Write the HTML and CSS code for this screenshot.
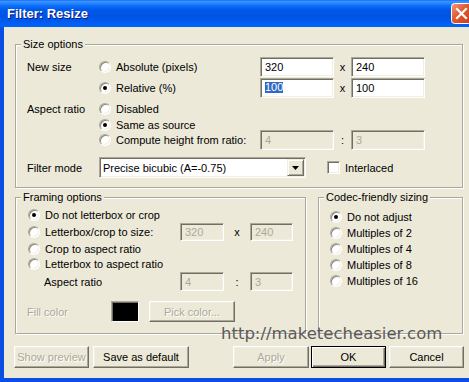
FILE: index.html
```html
<!DOCTYPE html>
<html lang="en">
<head>
    <meta charset="UTF-8">
    <meta name="viewport" content="width=device-width, initial-scale=1.0">
    <title>Filter: Resize</title>
    <link rel="stylesheet" href="styles.css">
</head>
<body>
<div class="window">
    <div class="titlebar">
        <span class="title">Filter: Resize</span>
        <svg class="close" width="21" height="21" viewBox="0 0 21 21">
            <defs>
                <linearGradient id="closeFill" x1="0" y1="0" x2="1" y2="1">
                    <stop offset="0" stop-color="#f39a7c"/>
                    <stop offset="0.45" stop-color="#e2582f"/>
                    <stop offset="1" stop-color="#c63e1a"/>
                </linearGradient>
            </defs>
            <rect x="0.5" y="0.5" width="20" height="20" rx="3" fill="url(#closeFill)" stroke="#fff"/>
            <path d="M6 6 L15 15 M15 6 L6 15" stroke="#fff" stroke-width="2.2" stroke-linecap="square"/>
        </svg>
    </div>

    <div class="client">
        <fieldset class="group">
            <legend>Size options</legend>
            <div class="size-grid">
                <span class="lbl">New size</span>
                <span class="opt"><i class="radio"></i>Absolute (pixels)</span>
                <span class="edit">320</span>
                <span class="sep">x</span>
                <span class="edit">240</span>

                <span class="opt c2"><i class="radio on"></i>Relative (%)</span>
                <span class="edit"><span class="sel">100</span></span>
                <span class="sep">x</span>
                <span class="edit">100</span>

                <span class="lbl c1">Aspect ratio</span>
                <span class="opt"><i class="radio"></i>Disabled</span>
                <span class="opt c2"><i class="radio on"></i>Same as source</span>
                <span class="opt c2"><i class="radio"></i>Compute height from ratio:</span>
                <span class="edit off">4</span>
                <span class="sep">:</span>
                <span class="edit off">3</span>
            </div>
            <div class="filter-row">
                <span class="lbl filter-lbl">Filter mode</span>
                <div class="combo">
                    <span class="combo-text">Precise bicubic (A=-0.75)</span>
                    <span class="drop">
                        <svg width="7" height="4" viewBox="0 0 7 4"><path d="M0 0 H7 L3.5 4 Z" fill="#000"/></svg>
                    </span>
                </div>
                <span class="opt interlaced"><i class="check"></i>Interlaced</span>
            </div>
        </fieldset>

        <div class="lower">
            <fieldset class="group framing">
                <legend>Framing options</legend>
                <div class="framing-grid">
                    <span class="opt c1"><i class="radio on"></i>Do not letterbox or crop</span>
                    <span class="opt c1"><i class="radio"></i>Letterbox/crop to size:</span>
                    <span class="edit off">320</span>
                    <span class="sep">x</span>
                    <span class="edit off">240</span>
                    <span class="opt c1"><i class="radio"></i>Crop to aspect ratio</span>
                    <span class="opt c1"><i class="radio"></i>Letterbox to aspect ratio</span>
                    <span class="lbl c1 indent">Aspect ratio</span>
                    <span class="edit off">4</span>
                    <span class="sep">:</span>
                    <span class="edit off">3</span>
                </div>
                <div class="fill-row">
                    <span class="lbl disabled fill-lbl">Fill color</span>
                    <span class="swatch"></span>
                    <button class="btn disabled pick">Pick color...</button>
                </div>
            </fieldset>

            <fieldset class="group codec">
                <legend>Codec-friendly sizing</legend>
                <div class="codec-list">
                    <span class="opt"><i class="radio on"></i>Do not adjust</span>
                    <span class="opt"><i class="radio"></i>Multiples of 2</span>
                    <span class="opt"><i class="radio"></i>Multiples of 4</span>
                    <span class="opt"><i class="radio"></i>Multiples of 8</span>
                    <span class="opt"><i class="radio"></i>Multiples of 16</span>
                </div>
            </fieldset>
        </div>

        <div class="buttons">
            <button class="btn disabled preview">Show preview</button>
            <button class="btn save">Save as default</button>
            <button class="btn disabled apply">Apply</button>
            <button class="btn default ok">OK</button>
            <button class="btn cancel">Cancel</button>
        </div>
    </div>

    <div class="watermark">http://maketecheasier.com</div>
</div>
</body>
</html>
```

FILE: styles.css
```css
* {
    box-sizing: border-box;
}
body {
    margin: 0;
    overflow: hidden;
    background: #fff;
    font-family: "Liberation Sans", Arial, sans-serif;
    font-size: 11px;
    color: #000;
}
.window {
    position: relative;
    width: 478px;
    height: 382px;
    display: flex;
    flex-direction: column;
}

/* title bar */
.titlebar {
    height: 27px;
    flex: none;
    display: flex;
    align-items: center;
    padding-left: 7px;
    background: linear-gradient(to bottom, #0a5cf0 0, #3d95ff 1px, #2a8aff 3px, #0a6cf8 6px, #0058e8 10px, #0054e3 16px, #0057ea 20px, #0061f6 24px, #0064f2 27px);
}
.title {
    color: #fff;
    font-weight: bold;
    font-size: 13px;
    line-height: 15px;
    text-shadow: 1px 1px 0 #0a1883;
}
.close {
    margin-left: auto;
    margin-right: 6px;
    display: block;
}

/* client area */
.client {
    flex: 1;
    display: flex;
    flex-direction: column;
    background: #ece9d8;
    border-left: 4px solid #0b4ee4;
    border-right: 4px solid #0b4ee4;
    border-bottom: 4px solid #0b4ee4;
    padding: 11px 11px 0;
}
.group {
    margin: 0;
    padding: 0;
    min-width: 0;
    border: 1px solid #aca899;
    box-shadow: inset 1px 1px 0 #fff, 1px 1px 0 #fff;
}
.group legend {
    margin-left: 5px;
    padding: 0 2px;
    line-height: 13px;
    background: #ece9d8;
}

.lbl {
    display: flex;
    align-items: center;
}
.opt {
    display: flex;
    align-items: center;
    white-space: nowrap;
}
.c1 {
    grid-column: 1;
}
.c2 {
    grid-column: 2;
}
.sep {
    display: flex;
    align-items: center;
    justify-content: center;
}

.radio {
    position: relative;
    flex: none;
    width: 12px;
    height: 12px;
    margin-right: 5px;
    border-radius: 50%;
    background: #fff;
    border: 1px solid;
    border-color: #aca899 #fff #fff #aca899;
    box-shadow: inset 1px 1px 0 #8d8a7d, inset -1px -1px 0 #f1efe2;
}
.radio.on::after {
    content: "";
    position: absolute;
    left: 3px;
    top: 3px;
    width: 4px;
    height: 4px;
    border-radius: 50%;
    background: #000;
}
.check {
    flex: none;
    width: 13px;
    height: 13px;
    margin-right: 5px;
    background: #fff;
    border: 1px solid;
    border-color: #aca899 #fff #fff #aca899;
    box-shadow: inset 1px 1px 0 #716f64, inset -1px -1px 0 #f1efe2;
}
.edit {
    display: flex;
    align-items: center;
    padding: 0 4px;
    background: #fff;
    border: 1px solid;
    border-color: #aca899 #fff #fff #aca899;
    box-shadow: inset 1px 1px 0 #716f64, inset -1px -1px 0 #f1efe2;
    white-space: nowrap;
}
.edit.off {
    background: #ece9d8;
    color: #aca899;
}
.sel {
    display: inline-block;
    height: 11px;
    line-height: 11px;
    background: #316ac5;
    color: #fff;
}

/* size options */
.size-grid {
    display: grid;
    grid-template-columns: 72px 161px 74px 17px 74px;
    grid-template-rows: 21px 21px 22px 10px 20px;
    align-items: center;
    padding: 5px 0 0 11px;
}
.size-grid .edit {
    height: 20px;
}
.filter-row {
    display: flex;
    align-items: center;
    margin-top: 7px;
    padding: 0 0 9px 11px;
}
.filter-lbl {
    width: 72px;
}
.combo {
    display: flex;
    align-items: center;
    width: 207px;
    height: 21px;
    padding: 1px;
    background: #fff;
    border: 1px solid;
    border-color: #aca899 #fff #fff #aca899;
    box-shadow: inset 1px 1px 0 #716f64, inset -1px -1px 0 #f1efe2;
}
.combo-text {
    padding-left: 2px;
}
.drop {
    margin-left: auto;
    width: 17px;
    height: 17px;
    display: flex;
    align-items: center;
    justify-content: center;
    background: #ece9d8;
    border: 1px solid;
    border-color: #f1efe2 #716f64 #716f64 #f1efe2;
    box-shadow: inset 1px 1px 0 #fff, inset -1px -1px 0 #aca899;
}
.drop svg {
    display: block;
}
.interlaced {
    margin-left: 21px;
}

/* lower groups */
.lower {
    display: flex;
    gap: 12px;
    margin-top: 3px;
}
.framing {
    width: 291px;
}
.codec {
    width: 145px;
}
.framing-grid {
    display: grid;
    grid-template-columns: 152px 44px 26px 43px;
    grid-template-rows: 16px 18px 15px 16px 19px;
    align-items: center;
    padding: 3px 0 0 12px;
}
.framing-grid .edit {
    align-self: stretch;
}
.indent {
    padding-left: 16px;
}
.fill-row {
    display: flex;
    align-items: center;
    height: 21px;
    margin-top: 10px;
    margin-bottom: 11px;
    padding-left: 11px;
}
.fill-lbl {
    width: 84px;
}
.disabled {
    color: #aca899;
    text-shadow: 1px 1px 0 #fff;
}
.swatch {
    width: 28px;
    height: 21px;
    margin-right: 10px;
    background: #000;
    border: 1px solid;
    border-color: #aca899 #fff #fff #aca899;
    box-shadow: inset 1px 1px 0 #716f64;
}
.codec-list {
    display: flex;
    flex-direction: column;
    padding: 5px 0 0 11px;
}
.codec-list .opt {
    height: 16px;
}

/* buttons */
.btn {
    height: 22px;
    padding: 0;
    font: inherit;
    color: #000;
    background: #ece9d8;
    border: 1px solid;
    border-color: #fff #716f64 #716f64 #fff;
    box-shadow: inset -1px -1px 0 #aca899, inset 1px 1px 0 #f1efe2;
}
.btn.disabled {
    color: #aca899;
}
.btn.default {
    border-color: #000;
    box-shadow: inset 1px 1px 0 #fff, inset -1px -1px 0 #716f64, inset -2px -2px 0 #aca899;
}
.pick {
    width: 86px;
    height: 21px;
}
.buttons {
    display: flex;
    margin: 12px -1px 0 -1px;
}
.preview {
    width: 75px;
}
.save {
    width: 96px;
    margin-left: 4px;
}
.apply {
    width: 76px;
    margin-left: auto;
}
.ok {
    width: 75px;
    margin-left: 2px;
}
.cancel {
    width: 75px;
    margin-left: 3px;
}

.watermark {
    position: absolute;
    left: 221px;
    top: 326px;
    font-family: "DejaVu Sans", sans-serif;
    font-size: 16.5px;
    line-height: 1;
    color: #5a5a5a;
    pointer-events: none;
}
```
